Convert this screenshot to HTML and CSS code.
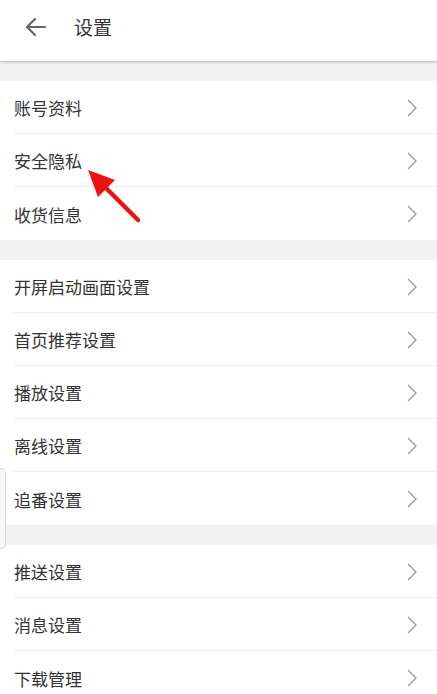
FILE: index.html
```html
<!DOCTYPE html>
<html lang="zh">
<head>
<meta charset="utf-8">
<title>设置</title>
<link rel="stylesheet" href="styles.css">
</head>
<body>
<header class="topbar">
  <svg class="back" width="22" height="20" viewBox="0 0 22 20"><path d="M21 10H3M11 2L3 10l8 8" fill="none" stroke="#666" stroke-width="2.2" stroke-linecap="round" stroke-linejoin="round"/></svg>
  <h1 class="title">设置</h1>
</header>
<main class="content">
  <section class="group">
    <div class="row"><span>账号资料</span><svg class="chev" width="10" height="18" viewBox="0 0 10 18"><path d="M1 1l8 8-8 8" fill="none" stroke="#9a9a9a" stroke-width="1.3"/></svg></div>
    <div class="row"><span>安全隐私</span><svg class="chev" width="10" height="18" viewBox="0 0 10 18"><path d="M1 1l8 8-8 8" fill="none" stroke="#9a9a9a" stroke-width="1.3"/></svg></div>
    <div class="row"><span>收货信息</span><svg class="chev" width="10" height="18" viewBox="0 0 10 18"><path d="M1 1l8 8-8 8" fill="none" stroke="#9a9a9a" stroke-width="1.3"/></svg></div>
  </section>
  <section class="group">
    <div class="row"><span>开屏启动画面设置</span><svg class="chev" width="10" height="18" viewBox="0 0 10 18"><path d="M1 1l8 8-8 8" fill="none" stroke="#9a9a9a" stroke-width="1.3"/></svg></div>
    <div class="row"><span>首页推荐设置</span><svg class="chev" width="10" height="18" viewBox="0 0 10 18"><path d="M1 1l8 8-8 8" fill="none" stroke="#9a9a9a" stroke-width="1.3"/></svg></div>
    <div class="row"><span>播放设置</span><svg class="chev" width="10" height="18" viewBox="0 0 10 18"><path d="M1 1l8 8-8 8" fill="none" stroke="#9a9a9a" stroke-width="1.3"/></svg></div>
    <div class="row"><span>离线设置</span><svg class="chev" width="10" height="18" viewBox="0 0 10 18"><path d="M1 1l8 8-8 8" fill="none" stroke="#9a9a9a" stroke-width="1.3"/></svg></div>
    <div class="row"><span>追番设置</span><svg class="chev" width="10" height="18" viewBox="0 0 10 18"><path d="M1 1l8 8-8 8" fill="none" stroke="#9a9a9a" stroke-width="1.3"/></svg></div>
  </section>
  <section class="group">
    <div class="row"><span>推送设置</span><svg class="chev" width="10" height="18" viewBox="0 0 10 18"><path d="M1 1l8 8-8 8" fill="none" stroke="#9a9a9a" stroke-width="1.3"/></svg></div>
    <div class="row"><span>消息设置</span><svg class="chev" width="10" height="18" viewBox="0 0 10 18"><path d="M1 1l8 8-8 8" fill="none" stroke="#9a9a9a" stroke-width="1.3"/></svg></div>
    <div class="row"><span>下载管理</span><svg class="chev" width="10" height="18" viewBox="0 0 10 18"><path d="M1 1l8 8-8 8" fill="none" stroke="#9a9a9a" stroke-width="1.3"/></svg></div>
  </section>
</main>
<div class="edge-tab"></div>
<svg class="annot" width="437" height="694" viewBox="0 0 437 694">
  <line x1="138" y1="220" x2="100" y2="182" stroke="#ee1111" stroke-width="4.5" stroke-linecap="round"/>
  <polygon points="88,170 115,180 98,197" fill="#ee1111"/>
</svg>
</body>
</html>
```
FILE: styles.css
```css
html, body {
  margin: 0;
  padding: 0;
  background: #f2f2f2;
  font-family: "Noto Sans CJK SC", "Noto Sans", sans-serif;
  width: 437px;
  height: 694px;
  overflow: hidden;
}
.topbar {
  height: 61px;
  box-sizing: border-box;
  padding-bottom: 8px;
  background: #fff;
  display: flex;
  align-items: center;
  box-shadow: 0 1px 3px rgba(0,0,0,0.25);
  position: relative;
  z-index: 1;
}
.back {
  margin-left: 24px;
  margin-top: 1px;
}
.title {
  margin: 0 0 0 28px;
  font-size: 19px;
  font-weight: normal;
  color: #333;
}
.content {
  padding-top: 20px;
  display: flex;
  flex-direction: column;
  gap: 20px;
}
.group {
  background: #fff;
  padding-left: 14px;
}
.row {
  height: 53px;
  box-sizing: border-box;
  display: flex;
  align-items: center;
  justify-content: space-between;
  border-bottom: 1px solid #ebebeb;
  font-size: 17px;
  color: #333;
  padding-right: 20px;
}
.row:last-child {
  border-bottom: none;
}
.row span {
  margin-top: 1px;
}
.chev {
  display: block;
  margin-top: 1px;
}
.edge-tab {
  position: absolute;
  left: -4px;
  top: 468px;
  width: 8px;
  height: 79px;
  border: 1px solid #d6d6d6;
  border-radius: 5px;
  background: #f7f7f7;
}
.annot {
  position: absolute;
  left: 0;
  top: 0;
  pointer-events: none;
}
```
